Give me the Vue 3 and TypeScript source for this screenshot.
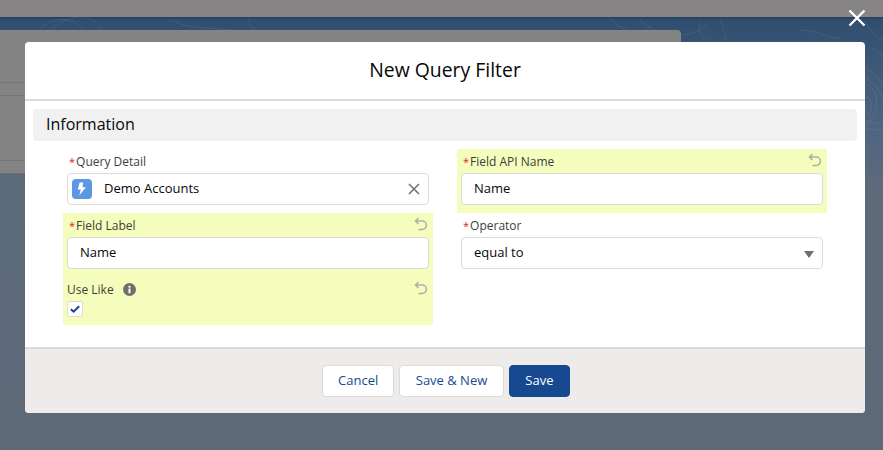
<script setup lang="ts">
const contourPaths = [
  'M40 30c10-14 34-14 44 0s-4 24-22 22-30-10-22-22z',
  'M62 22c12-8 34-6 40 8s-8 28-30 28-42-20-10-36z',
  'M170 20c20 10 50 8 60 10M250 18c-6 6 4 8 4 12',
  'M610 18c10 14 34 18 40 8M640 20c16 18 58 20 66 4',
  'M720 20c10 16 0 40 24 36s36-12 60-4',
  'M700 22c-4 18 10 22 20 20M800 30c20 0 30 10 40 8',
  'M866 78c10 8 14 12 17 24M866 68c8 6 14 10 17 18',
  'M866 84c14 6 12 24 6 34s-2 8-6 4',
  'M866 96c8 4 6 14 2 18',
  'M866 120c6 4 12 4 17 2M866 128c6 3 12 2 17 0',
  'M866 24c6 8 10 14 17 16M872 48c4 4 8 6 11 6',
];
</script>

<template>
  <div class="page">
    <div class="backdrop">
      <div class="top-bar"></div>
      <svg class="contours" width="883" height="240" viewBox="0 0 883 240" fill="none" aria-hidden="true">
        <path v-for="d in contourPaths" :key="d" :d="d" stroke="#fff" stroke-opacity="0.07" />
      </svg>
      <div class="behind-card">
        <div class="behind-row"></div>
        <div class="behind-row behind-row--low"></div>
      </div>
    </div>

    <svg class="close" width="18" height="18" viewBox="0 0 18 18" aria-hidden="true">
      <path d="M1.5 1.5l15 15M16.5 1.5l-15 15" stroke="#fff" stroke-width="2.4" />
    </svg>

    <section class="modal">
      <header class="modal__header">New Query Filter</header>

      <div class="modal__body">
        <h3 class="section-title">Information</h3>

        <div class="form">
          <div class="form__col">
            <div class="field">
              <label class="field__label"><span class="req">*</span>Query Detail</label>
              <div class="input input--lookup">
                <span class="lookup-icon">
                  <svg width="20" height="20" viewBox="0 0 20 20" aria-hidden="true">
                    <path d="M11.2 3.6H7.6L5.8 10.6h3l-1.5 6 6.6-8.4h-3.4z" fill="#fff" />
                  </svg>
                </span>
                <span class="lookup-text">Demo Accounts</span>
                <svg class="clear" width="12" height="12" viewBox="0 0 12 12" aria-hidden="true">
                  <path d="M1 1l10 10M11 1L1 11" stroke="#706e6b" stroke-width="1.5" />
                </svg>
              </div>
            </div>

            <div class="changed">
              <div class="field">
                <svg class="undo" width="14" height="14" viewBox="0 0 14 14" fill="none" aria-hidden="true">
                  <path d="M4.5 1L1.5 4l3 3M2 4h6.2a4 4 0 0 1 0 8.4H4.5" stroke="#b0adab" stroke-width="1.5" />
                </svg>
                <label class="field__label"><span class="req">*</span>Field Label</label>
                <div class="input">Name</div>
              </div>
              <div class="field field--check">
                <svg class="undo" width="14" height="14" viewBox="0 0 14 14" fill="none" aria-hidden="true">
                  <path d="M4.5 1L1.5 4l3 3M2 4h6.2a4 4 0 0 1 0 8.4H4.5" stroke="#b0adab" stroke-width="1.5" />
                </svg>
                <div class="field__label">
                  Use Like
                  <svg class="info" width="13" height="13" viewBox="0 0 13 13" aria-hidden="true">
                    <circle cx="6.5" cy="6.5" r="6.5" fill="#706e6b" />
                    <rect x="5.5" y="5.6" width="2" height="4.6" fill="#fff" />
                    <rect x="5.5" y="2.8" width="2" height="1.9" fill="#fff" />
                  </svg>
                </div>
                <span class="checkbox">
                  <svg width="10" height="8" viewBox="0 0 10 8" aria-hidden="true">
                    <path d="M0.8 4.2L3.6 6.6L9.2 1.2" fill="none" stroke="#16498f" stroke-width="2" />
                  </svg>
                </span>
              </div>
            </div>
          </div>

          <div class="form__col">
            <div class="changed">
              <div class="field">
                <svg class="undo" width="14" height="14" viewBox="0 0 14 14" fill="none" aria-hidden="true">
                  <path d="M4.5 1L1.5 4l3 3M2 4h6.2a4 4 0 0 1 0 8.4H4.5" stroke="#b0adab" stroke-width="1.5" />
                </svg>
                <label class="field__label"><span class="req">*</span>Field API Name</label>
                <div class="input">Name</div>
              </div>
            </div>
            <div class="field">
              <label class="field__label"><span class="req">*</span>Operator</label>
              <div class="input input--select">
                equal to
                <span class="caret"></span>
              </div>
            </div>
          </div>
        </div>
      </div>

      <footer class="modal__footer">
        <button class="btn btn--cancel" type="button">Cancel</button>
        <button class="btn" type="button">Save &amp; New</button>
        <button class="btn btn--brand" type="button">Save</button>
      </footer>
    </section>
  </div>
</template>

<style>
html,
body {
  margin: 0;
  overflow: hidden;
}
</style>

<style scoped>
.page {
  background: linear-gradient(180deg, #2f4d6f 17px, #3f5a78 70px, #4f6580 130px, #5d6a7a 185px, #5d6977 100%);
  box-sizing: border-box;
  color: #080707;
  font-family: "Open Sans", Lato, sans-serif;
  font-size: 13px;
  height: 450px;
  overflow: hidden;
  padding: 42px 18px 0 25px;
  position: relative;
  width: 883px;
}

.backdrop {
  inset: 0;
  position: absolute;
}

.top-bar {
  background: #868484;
  box-shadow: 0 1px 2px rgba(0, 0, 0, 0.25);
  height: 17px;
}

.contours {
  left: 0;
  position: absolute;
  top: 0;
}

.behind-card {
  background: #848484;
  border-radius: 0 4px 0 0;
  border-bottom: 1px solid #6e6c70;
  box-sizing: border-box;
  height: 144px;
  left: 0;
  padding-top: 52px;
  position: absolute;
  top: 30px;
  width: 681px;
}

.behind-row {
  border-bottom: 1px solid #767676;
  border-top: 1px solid #767676;
  height: 12px;
}

.behind-row--low {
  border-top: 0;
  height: 64px;
}

.close {
  left: 848px;
  position: absolute;
  top: 9px;
}

.modal {
  background: #fff;
  border-radius: 4px;
  display: flex;
  flex-direction: column;
  height: 371px;
  overflow: hidden;
  position: relative;
}

.modal__header {
  align-items: center;
  border-bottom: 2px solid #dddbda;
  box-sizing: content-box;
  display: flex;
  flex: none;
  font-size: 19.4px;
  height: 55px;
  justify-content: center;
  padding-bottom: 2px;
}

.modal__body {
  flex: 1;
  padding: 8px 8px 0;
}

.section-title {
  background: #f1f1f1;
  border-radius: 4px;
  font-size: 16px;
  font-weight: 400;
  height: 32px;
  line-height: 30px;
  margin: 0;
  padding-left: 13px;
}

.form {
  display: grid;
  gap: 24px;
  grid-template-columns: 370px 370px;
  padding: 8px 30px 0;
}

.form__col {
  display: flex;
  flex-direction: column;
}

.changed {
  background: #f4fdbb;
}

.field {
  box-sizing: border-box;
  height: 64px;
  padding: 3px 4px 0;
  position: relative;
}

.field--check {
  height: 48px;
}

.field__label {
  align-items: center;
  color: #3e3e3c;
  display: flex;
  font-size: 12px;
  height: 18px;
  margin-bottom: 3px;
}

.req {
  color: #d7261e;
  font-size: 11px;
  margin: 0 1px 0 2px;
}

.input {
  align-items: center;
  background: #fff;
  border: 1px solid #dddbda;
  border-radius: 4px;
  box-sizing: border-box;
  display: flex;
  height: 32px;
  padding: 0 0 2px 12px;
  position: relative;
}

.input--lookup {
  padding: 0 0 0 4px;
}

.lookup-icon {
  align-items: center;
  background: #5c98e2;
  border-radius: 4px;
  display: flex;
  height: 20px;
  justify-content: center;
  width: 20px;
}

.lookup-text {
  margin-bottom: 2px;
  margin-left: 12px;
}

.clear {
  position: absolute;
  right: 8px;
  top: 9px;
}

.undo {
  position: absolute;
  right: 5px;
  top: 4px;
}

.info {
  margin-left: 9px;
  margin-top: 1px;
}

.checkbox {
  align-items: center;
  background: #fff;
  border: 1px solid #dddbda;
  border-radius: 2px;
  box-sizing: border-box;
  display: flex;
  height: 16px;
  justify-content: center;
  width: 16px;
}

.caret {
  border-left: 5px solid transparent;
  border-right: 5px solid transparent;
  border-top: 7px solid #706e6b;
  position: absolute;
  right: 8px;
  top: 13px;
}

.modal__footer {
  background: #eeecea;
  border-top: 2px solid #dddbda;
  box-sizing: border-box;
  display: flex;
  flex: none;
  gap: 5px;
  height: 66px;
  justify-content: center;
  padding: 16px 0 0 2px;
}

.btn {
  background: #fff;
  border: 1px solid #dddbda;
  border-radius: 4px;
  color: #16498f;
  font-family: inherit;
  font-size: 13px;
  height: 32px;
  padding: 0 15.5px 2px;
}

.btn--cancel {
  padding: 0 15px 2px;
}

.btn--brand {
  background: #16498f;
  border-color: #16498f;
  color: #fff;
  font-weight: 500;
}
</style>
